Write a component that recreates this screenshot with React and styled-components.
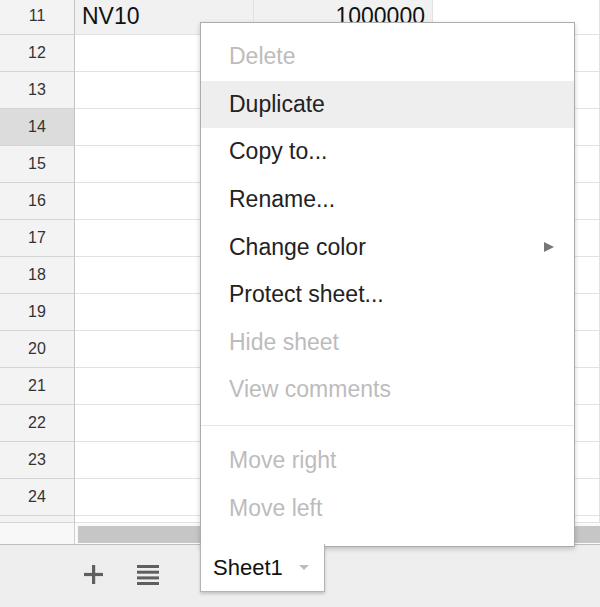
import React from 'react';
import styled, { createGlobalStyle } from 'styled-components';

const GlobalStyle = createGlobalStyle`
  html, body {
    margin: 0;
    padding: 0;
    background: #ffffff;
  }
  body {
    font-family: "Liberation Sans", Arial, sans-serif;
  }
`;

const Screen = styled.div`
  position: relative;
  width: 600px;
  height: 607px;
  overflow: hidden;
  display: flex;
  flex-direction: column;
  background: #ffffff;
`;

const Sheet = styled.div`
  display: grid;
  grid-template-columns: 75px 179px 179px 1fr;
  margin-top: -2px;
`;

const RowHead = styled.div`
  height: ${(p) => p.h || 36}px;
  background: ${(p) => (p.active ? '#dcdcdc' : '#f3f3f3')};
  border-right: 1px solid #c4c4c4;
  border-bottom: 1px solid #d4d4d4;
  display: flex;
  align-items: center;
  justify-content: center;
  font-size: 16px;
  color: #333;
`;

const Cell = styled.div`
  height: ${(p) => p.h || 36}px;
  background: ${(p) => (p.shaded ? '#f1f1f1' : '#ffffff')};
  border-right: 1px solid #e2e2e2;
  border-bottom: 1px solid #e2e2e2;
  display: flex;
  align-items: center;
  justify-content: ${(p) => (p.right ? 'flex-end' : 'flex-start')};
  padding: 0 7px;
  font-size: 23px;
  color: #111;
  overflow: hidden;
  white-space: nowrap;
`;

const ScrollStrip = styled.div`
  display: flex;
  height: 21px;
  border-bottom: 1px solid #bdbdbd;
`;

const ScrollCorner = styled.div`
  width: 74px;
  background: #f8f8f8;
  border-right: 1px solid #d0d0d0;
`;

const ScrollTrack = styled.div`
  flex: 1;
  background: #fafafa;
  padding: 3px 0 1px 3px;
  display: flex;
`;

const Thumb = styled.div`
  flex: 1;
  background: #c6c6c6;
`;

const Footer = styled.div`
  flex: 1;
  background: #eeeeee;
  display: flex;
  align-items: flex-start;
`;

const IconButton = styled.div`
  width: ${(p) => p.w}px;
  margin-left: ${(p) => p.ml}px;
  margin-top: ${(p) => p.mt}px;
  display: flex;
  color: #5f5f5f;
`;

const Tab = styled.div`
  position: relative;
  z-index: 3;
  margin-left: 41px;
  margin-top: -1px;
  width: 125px;
  height: 48px;
  box-sizing: border-box;
  background: #ffffff;
  border: 1px solid #b4b4b4;
  border-top: none;
  box-shadow: 0 2px 3px rgba(0, 0, 0, 0.18);
  display: flex;
  align-items: center;
  padding-left: 12px;
  font-size: 22px;
  color: #111;
`;

const TabArrow = styled.span`
  margin-left: 16px;
  width: 0;
  height: 0;
  border-left: 5px solid transparent;
  border-right: 5px solid transparent;
  border-top: 5px solid #bdbdbd;
`;

const Menu = styled.div`
  position: absolute;
  z-index: 2;
  left: 200px;
  top: 22px;
  width: 375px;
  height: 525px;
  box-sizing: border-box;
  background: #ffffff;
  border: 1px solid #acacac;
  box-shadow: 0 2px 5px rgba(0, 0, 0, 0.2);
  padding: 10px 0 12px;
  display: flex;
  flex-direction: column;
`;

const Item = styled.div`
  height: 47.6px;
  flex-shrink: 0;
  display: flex;
  align-items: center;
  justify-content: space-between;
  padding: 0 20px 0 28px;
  font-size: 23px;
  color: ${(p) => (p.disabled ? '#bcbcbc' : '#222')};
  background: ${(p) => (p.hover ? '#eeeeee' : 'transparent')};
`;

const SubArrow = styled.span`
  width: 0;
  height: 0;
  border-top: 5px solid transparent;
  border-bottom: 5px solid transparent;
  border-left: 10px solid #777;
`;

const Separator = styled.div`
  flex-shrink: 0;
  height: 1px;
  background: #e6e6e6;
  margin: 11px 0 11px;
`;

const rows = [11, 12, 13, 14, 15, 16, 17, 18, 19, 20, 21, 22, 23, 24];

const items = [
  { label: 'Delete', disabled: true },
  { label: 'Duplicate', hover: true },
  { label: 'Copy to...' },
  { label: 'Rename...' },
  { label: 'Change color', sub: true },
  { label: 'Protect sheet...' },
  { label: 'Hide sheet', disabled: true },
  { label: 'View comments', disabled: true },
  { sep: true },
  { label: 'Move right', disabled: true },
  { label: 'Move left', disabled: true },
];

function PlusIcon() {
  return (
    <svg width="19" height="19" viewBox="0 0 19 19">
      <rect x="8" y="0" width="3.2" height="19" fill="currentColor" />
      <rect x="0" y="7.9" width="19" height="3.2" fill="currentColor" />
    </svg>
  );
}

function ListIcon() {
  return (
    <svg width="22" height="20" viewBox="0 0 22 20">
      <rect x="0" y="0" width="22" height="3" fill="currentColor" />
      <rect x="0" y="5.7" width="22" height="3" fill="currentColor" />
      <rect x="0" y="11.4" width="22" height="3" fill="currentColor" />
      <rect x="0" y="17" width="22" height="3" fill="currentColor" />
    </svg>
  );
}

export default function App() {
  return (
    <Screen>
      <GlobalStyle />
      <Sheet>
        {rows.map((n) => (
          <React.Fragment key={n}>
            <RowHead active={n === 14}>{n}</RowHead>
            <Cell shaded={n === 11}>{n === 11 ? 'NV10' : ''}</Cell>
            <Cell shaded={n === 11} right>
              {n === 11 ? '1000000' : ''}
            </Cell>
            <Cell />
          </React.Fragment>
        ))}
        <RowHead h={6} />
        <Cell h={6} />
        <Cell h={6} />
        <Cell h={6} />
      </Sheet>
      <ScrollStrip>
        <ScrollCorner />
        <ScrollTrack>
          <Thumb />
        </ScrollTrack>
      </ScrollStrip>
      <Footer>
        <IconButton w={19} ml={84} mt={20}>
          <PlusIcon />
        </IconButton>
        <IconButton w={22} ml={34} mt={20}>
          <ListIcon />
        </IconButton>
        <Tab>
          Sheet1
          <TabArrow />
        </Tab>
      </Footer>
      <Menu>
        {items.map((it, i) =>
          it.sep ? (
            <Separator key={i} />
          ) : (
            <Item key={i} disabled={it.disabled} hover={it.hover}>
              {it.label}
              {it.sub && <SubArrow />}
            </Item>
          )
        )}
      </Menu>
    </Screen>
  );
}
